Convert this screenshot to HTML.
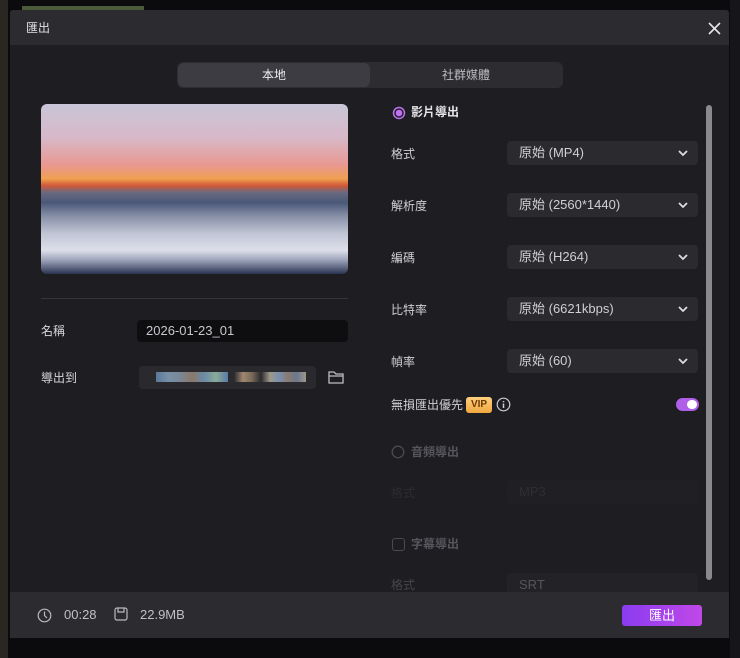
<!DOCTYPE html><html><head><meta charset="utf-8"><style>
*{margin:0;padding:0;box-sizing:border-box}
body{width:740px;height:658px;background:#0b0b0e;font-family:"Liberation Sans","Noto Sans CJK TC",sans-serif;font-size:12px;line-height:1.3;color:#d6d6da;position:relative;overflow:hidden}
.a{position:absolute}
.dlg{position:absolute;left:10px;top:10px;width:719px;height:628px;background:#1e1e22;border-radius:3px;overflow:hidden}
.lab{position:absolute;left:391px;font-size:12px;color:#cfcfd4}
.dd{position:absolute;left:507px;width:191px;height:24px;background:#2a2a2f;border-radius:4px;color:#cfcfd4;font-size:13px;line-height:24px;padding-left:12px}
.dd svg{position:absolute;right:10px;top:9px}
</style></head><body>
<div class="a" style="left:0;top:0;width:8px;height:658px;background:#2a2622"></div>
<div class="a" style="left:730px;top:0;width:10px;height:658px;background:#15151a"></div>
<div class="a" style="left:22px;top:6px;width:122px;height:6px;background:#4a5a3a"></div>
<div class="dlg">
<div class="a" style="left:0;top:0;width:719px;height:35px;background:#2b2b30"></div>
<div class="a" style="left:16px;top:11px;font-size:12px;color:#e0e0e4">匯出</div>
<svg class="a" style="left:698px;top:12px" width="13" height="13"><path d="M1 1L12 12M12 1L1 12" stroke="#e6e6ea" stroke-width="1.6"/></svg>
<div class="a" style="left:167px;top:52px;width:386px;height:26px;background:#2c2c31;border-radius:6px"></div>
<div class="a" style="left:168px;top:53px;width:192px;height:24px;background:#3c3c42;border-radius:6px;text-align:center;line-height:24px;color:#f0f0f2">本地</div>
<div class="a" style="left:360px;top:53px;width:192px;height:24px;text-align:center;line-height:24px;color:#bdbdc2">社群媒體</div>
<div class="a" style="left:31px;top:94px;width:307px;height:170px;border-radius:6px;overflow:hidden;background:linear-gradient(180deg,#c8c6d8 0%,#d8b8c8 20%,#e89890 36%,#f0a050 44%,#d05838 48%,#6a6a80 52%,#4a5878 58%,#8890a8 66%,#c0c4d4 76%,#dde0ea 86%,#9aa0b8 92%,#2a3450 100%)"></div>
<div class="a" style="left:31px;top:288px;width:307px;height:1px;background:#34343a"></div>
<div class="a" style="left:31px;top:314px">名稱</div>
<div class="a" style="left:127px;top:310px;width:211px;height:22px;background:#0e0e11;border-radius:4px;padding-left:9px;line-height:22px;color:#c8c8cc;font-size:13px">2026-01-23_01</div>
<div class="a" style="left:31px;top:361px">導出到</div>
<div class="a" style="left:129px;top:356px;width:177px;height:23px;background:#29292e;border-radius:4px"></div>
<div class="a" style="left:146px;top:362px;width:150px;height:10px;background:linear-gradient(90deg,#5a7898,#7890a8,#7a8898,#8a7868,#6a8aa8,#8aaa98,#5a7aa8 48%,#29292e 48%,#29292e 52%,#a08870,#7a6a5a,#2a2a30,#a09888,#7890b0,#8a7a70,#6a7890,#a09888)"></div>
<svg class="a" style="left:318px;top:360px" width="16" height="14" fill="none" stroke="#bdbdc2" stroke-width="1.3"><path d="M1 2h5l2 2h7v9H1zM1 6h14"/></svg>
<div class="a" style="left:696px;top:95px;width:6px;height:475px;background:#8a8a8e;border-radius:3px"></div>
<svg class="a" style="left:382px;top:96px" width="14" height="14"><circle cx="7" cy="7" r="5.5" fill="none" stroke="#c070f0" stroke-width="1.5"/><circle cx="7" cy="7" r="3.3" fill="#c070f0"/></svg>
<div class="a" style="left:401px;top:95px;font-weight:bold;color:#e6e6ea">影片導出</div>
</div>
<div class="lab" style="top:147px">格式</div><div class="dd" style="top:141px">原始 (MP4)<svg width="10" height="7"><path d="M1 1l4 4 4-4" stroke="#ddd" stroke-width="1.8" fill="none"/></svg></div>
<div class="lab" style="top:199px">解析度</div><div class="dd" style="top:193px">原始 (2560*1440)<svg width="10" height="7"><path d="M1 1l4 4 4-4" stroke="#ddd" stroke-width="1.8" fill="none"/></svg></div>
<div class="lab" style="top:251px">編碼</div><div class="dd" style="top:245px">原始 (H264)<svg width="10" height="7"><path d="M1 1l4 4 4-4" stroke="#ddd" stroke-width="1.8" fill="none"/></svg></div>
<div class="lab" style="top:303px">比特率</div><div class="dd" style="top:297px">原始 (6621kbps)<svg width="10" height="7"><path d="M1 1l4 4 4-4" stroke="#ddd" stroke-width="1.8" fill="none"/></svg></div>
<div class="lab" style="top:355px">幀率</div><div class="dd" style="top:349px">原始 (60)<svg width="10" height="7"><path d="M1 1l4 4 4-4" stroke="#ddd" stroke-width="1.8" fill="none"/></svg></div>
<div class="lab" style="top:398px">無損匯出優先</div>
<div class="a" style="left:466px;top:397px;width:26px;height:16px;background:linear-gradient(#ffd080,#f0a840);border-radius:3px;color:#6a3a00;font-size:10px;font-weight:bold;text-align:center;line-height:16px">VIP</div>
<svg class="a" style="left:496px;top:397px" width="15" height="15"><circle cx="7.5" cy="7.5" r="6.3" fill="none" stroke="#ccc" stroke-width="1.2"/><path d="M7.5 6.5v4.5M7.5 4v1.3" stroke="#ccc" stroke-width="1.5"/></svg>
<div class="a" style="left:676px;top:398px;width:23px;height:13px;background:#b060e8;border-radius:7px"></div>
<div class="a" style="left:687px;top:400px;width:10px;height:9px;background:#fff;border-radius:5px"></div>
<svg class="a" style="left:391px;top:445px" width="14" height="14"><circle cx="7" cy="7" r="5.8" fill="none" stroke="#4a4a50" stroke-width="1.3"/></svg>
<div class="a" style="left:411px;top:445px;color:#55555b;font-weight:bold">音頻導出</div>
<div class="lab" style="top:486px;color:#2c2c31">格式</div>
<div class="dd" style="top:480px;background:#202024;color:#2e2e33">MP3</div>
<div class="a" style="left:392px;top:538px;width:13px;height:13px;border:1.3px solid #4a4a50;border-radius:3px"></div>
<div class="a" style="left:411px;top:537px;color:#55555b;font-weight:bold">字幕導出</div>
<div class="lab" style="top:578px;color:#45454a">格式</div>
<div class="dd" style="top:573px;background:#232327;color:#55555b">SRT</div>
<div class="a" style="left:10px;top:592px;width:719px;height:46px;background:#2b2b30"></div>
<svg class="a" style="left:37px;top:608px" width="15" height="15" fill="none" stroke="#bbb" stroke-width="1.2"><circle cx="7.5" cy="7.5" r="6.3"/><path d="M7.5 3.5v4l2.5 2.5"/></svg>
<div class="a" style="left:64px;top:607px;color:#c0c0c5;font-size:13px">00:28</div>
<svg class="a" style="left:114px;top:607px" width="14" height="14" fill="none" stroke="#bbb" stroke-width="1.2"><rect x="1" y="1" width="12" height="12" rx="2"/><path d="M4 1v4h6V1"/></svg>
<div class="a" style="left:140px;top:607px;color:#c0c0c5;font-size:13px">22.9MB</div>
<div class="a" style="left:622px;top:605px;width:80px;height:21px;background:linear-gradient(90deg,#8a3cf0,#c048e8);border-radius:3px;text-align:center;line-height:21px;color:#fff;font-size:13px">匯出</div>
</body></html>
